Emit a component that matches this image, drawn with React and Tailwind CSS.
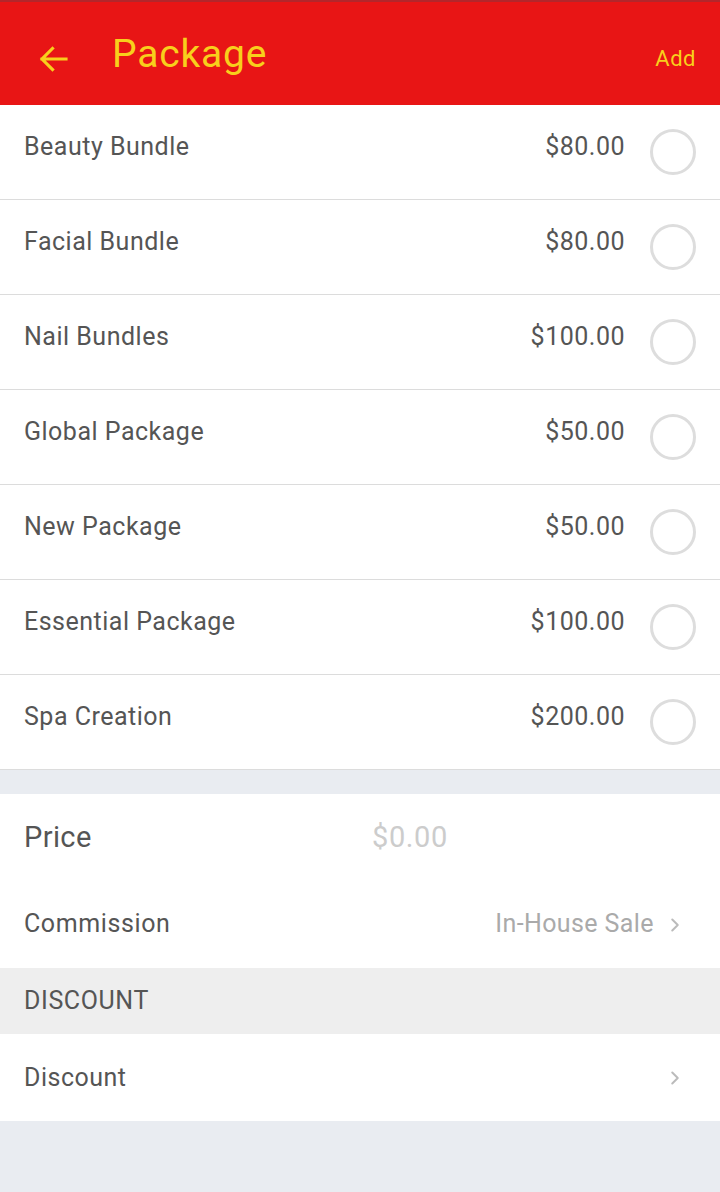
import { ChevronRight } from "lucide-react";

const packages = [
  { name: "Beauty Bundle", price: "$80.00" },
  { name: "Facial Bundle", price: "$80.00" },
  { name: "Nail Bundles", price: "$100.00" },
  { name: "Global Package", price: "$50.00" },
  { name: "New Package", price: "$50.00" },
  { name: "Essential Package", price: "$100.00" },
  { name: "Spa Creation", price: "$200.00" },
];

const App = () => {
  return (
    <div className="min-h-[1192px] bg-[#e9ecf1] font-['Roboto',sans-serif]">
      {/* Header */}
      <div className="border-t-2 border-[#b3262b] bg-[#e81515] h-[105px] flex items-center pl-[36px] pr-[24px]">
        <svg width="36" height="36" viewBox="0 0 24 24" className="mt-[10px]">
          <path d="M20 12H4M11 5l-7 7 7 7" fill="none" stroke="#f8cf1c" strokeWidth="2.1" strokeLinecap="square" />
        </svg>
        <h1 className="ml-[40px] text-[39px] tracking-[0.8px] text-[#f8cf1c] mt-[2px]">Package</h1>
        <button className="ml-auto text-[22px] tracking-[0.5px] text-[#f8cf1c] mt-[10px]">Add</button>
      </div>

      {/* Package list */}
      <ul className="bg-white">
        {packages.map((item, index) => (
          <li key={index} className="h-[95px] border-b border-[#dcdcdc] flex items-center pl-[24px] pr-[24px]">
            <span className="text-[25px] tracking-[0.5px] text-[#555555] -mt-[10px]">{item.name}</span>
            <span className="ml-auto text-[25px] tracking-[0.5px] text-[#555555] -mt-[10px]">{item.price}</span>
            <span className="ml-[25px] w-[46px] h-[46px] rounded-full border-[3px] border-[#dddddd]"></span>
          </li>
        ))}
      </ul>

      <div className="h-[24px]"></div>

      {/* Price and commission */}
      <div className="bg-white">
        <div className="h-[87px] flex items-center px-[24px]">
          <span className="w-[348px] text-[29px] tracking-[0.4px] text-[#555555]">Price</span>
          <span className="text-[29px] tracking-[0.6px] text-[#cccccc]">$0.00</span>
        </div>
        <div className="h-[87px] flex items-center pl-[24px] pr-[34px]">
          <span className="text-[25px] tracking-[0.6px] text-[#555555] -mt-[2px]">Commission</span>
          <span className="ml-auto text-[25px] tracking-[0.4px] text-[#aaaaaa] -mt-[2px]">In-House Sale</span>
          <ChevronRight className="ml-[10px] text-[#bbbbbb]" size={22} strokeWidth={2.2} />
        </div>
      </div>

      <div className="h-[66px] bg-[#eeeeee] flex items-center px-[24px]">
        <span className="text-[25px] tracking-[0.6px] text-[#555555]">DISCOUNT</span>
      </div>

      <div className="bg-white h-[87px] flex items-center pl-[24px] pr-[34px]">
        <span className="text-[25px] tracking-[0.5px] text-[#555555]">Discount</span>
        <ChevronRight className="ml-auto text-[#bbbbbb]" size={22} strokeWidth={2.2} />
      </div>
    </div>
  );
};

export default App;
